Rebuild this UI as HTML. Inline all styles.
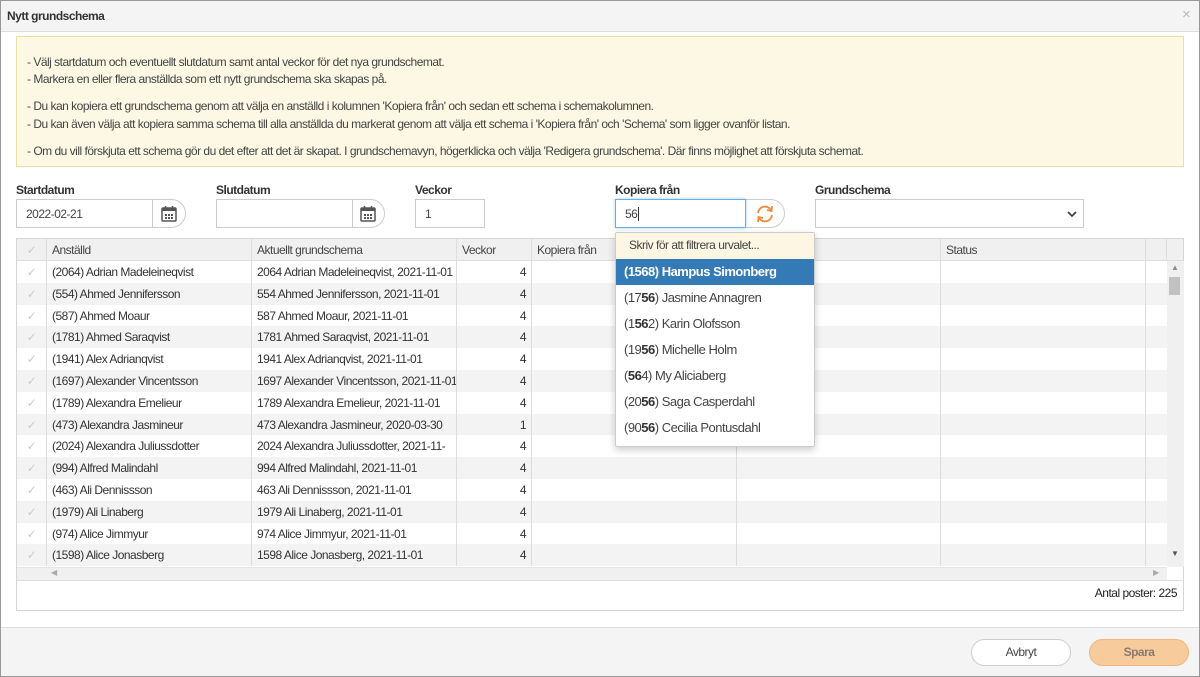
<!DOCTYPE html>
<html><head><meta charset="utf-8"><style>
*{box-sizing:border-box;margin:0;padding:0}
body{width:1200px;height:677px;overflow:hidden;background:#fff;font-family:"Liberation Sans",sans-serif;font-size:12px;color:#333;position:relative;letter-spacing:-0.5px}
.a{position:absolute}
.lbl{font-weight:bold;font-size:12px;color:#333}
.inp{position:absolute;border:1px solid #ccc;background:#fff;height:29px;padding:7px 9px;color:#444}
.grid{position:absolute;left:16px;top:238px;width:1168px;height:373px;border:1px solid #d5d5d5}
.row{position:absolute;left:0;width:1150px;height:22px;line-height:22px}
.c{position:absolute;top:0;height:22px;border-right:1px solid #ddd;padding:0 5px;white-space:nowrap;overflow:hidden}
.chk{color:#ccc;text-align:center}
.dd div{height:26px;line-height:26px;padding-left:8px;font-size:13px;color:#444}
.dd b{color:#333}
</style></head><body>
<div class="a" style="left:0;top:0;width:1200px;height:677px;border:1px solid #999"></div>
<div class="a" style="left:1px;top:1px;width:1198px;height:31px;background:#f4f4f4;border-bottom:1px solid #ddd"></div>
<div class="a" style="left:7px;top:9px;font-weight:bold;font-size:12px">Nytt grundschema</div>
<div class="a" style="left:1182px;top:6px;color:#bbb;font-size:15px">×</div>

<div class="a" style="left:16px;top:36px;width:1168px;height:131px;background:#fcf8e3;border:1px solid #e8dfa8;color:#444">
<div style="position:absolute;top:18px;left:10px">- Välj startdatum och eventuellt slutdatum samt antal veckor för det nya grundschemat.</div>
<div style="position:absolute;top:35px;left:10px">- Markera en eller flera anställda som ett nytt grundschema ska skapas på.</div>
<div style="position:absolute;top:62px;left:10px">- Du kan kopiera ett grundschema genom att välja en anställd i kolumnen 'Kopiera från' och sedan ett schema i schemakolumnen.</div>
<div style="position:absolute;top:80px;left:10px">- Du kan även välja att kopiera samma schema till alla anställda du markerat genom att välja ett schema i 'Kopiera från' och 'Schema' som ligger ovanför listan.</div>
<div style="position:absolute;top:107px;left:10px">- Om du vill förskjuta ett schema gör du det efter att det är skapat. I grundschemavyn, högerklicka och välja 'Redigera grundschema'. Där finns möjlighet att förskjuta schemat.</div>
</div>

<div class="a lbl" style="left:16px;top:183px">Startdatum</div>
<div class="a lbl" style="left:216px;top:183px">Slutdatum</div>
<div class="a lbl" style="left:415px;top:183px">Veckor</div>
<div class="a lbl" style="left:615px;top:183px">Kopiera från</div>
<div class="a lbl" style="left:815px;top:183px">Grundschema</div>

<div class="inp" style="left:16px;top:199px;width:170px;border-radius:0 15px 15px 0">2022-02-21</div>
<div class="a" style="left:152px;top:200px;width:1px;height:27px;background:#ccc"></div>
<svg class="a" style="left:160px;top:205px" width="18" height="18" viewBox="0 0 18 18"><rect x="2" y="3" width="14" height="13" rx="1" fill="none" stroke="#555" stroke-width="1.5"/><rect x="2" y="3" width="14" height="3" fill="#555"/><line x1="5.5" y1="1" x2="5.5" y2="4" stroke="#555" stroke-width="1.5"/><line x1="12.5" y1="1" x2="12.5" y2="4" stroke="#555" stroke-width="1.5"/><g fill="#555"><rect x="5" y="9" width="2" height="2"/><rect x="8" y="9" width="2" height="2"/><rect x="11" y="9" width="2" height="2"/><rect x="5" y="12" width="2" height="2"/><rect x="8" y="12" width="2" height="2"/><rect x="11" y="12" width="2" height="2"/></g></svg>
<div class="inp" style="left:216px;top:199px;width:169px;border-radius:0 15px 15px 0"></div>
<div class="a" style="left:352px;top:200px;width:1px;height:27px;background:#ccc"></div>
<svg class="a" style="left:359px;top:205px" width="18" height="18" viewBox="0 0 18 18"><rect x="2" y="3" width="14" height="13" rx="1" fill="none" stroke="#555" stroke-width="1.5"/><rect x="2" y="3" width="14" height="3" fill="#555"/><line x1="5.5" y1="1" x2="5.5" y2="4" stroke="#555" stroke-width="1.5"/><line x1="12.5" y1="1" x2="12.5" y2="4" stroke="#555" stroke-width="1.5"/><g fill="#555"><rect x="5" y="9" width="2" height="2"/><rect x="8" y="9" width="2" height="2"/><rect x="11" y="9" width="2" height="2"/><rect x="5" y="12" width="2" height="2"/><rect x="8" y="12" width="2" height="2"/><rect x="11" y="12" width="2" height="2"/></g></svg>
<div class="inp" style="left:415px;top:199px;width:70px">1</div>

<div class="inp" style="left:745px;top:199px;width:40px;border-radius:0 15px 15px 0;border-left:none"></div>
<svg class="a" style="left:754px;top:203px" width="22" height="22" viewBox="0 0 22 22"><path d="M4 10 A7 7 0 0 1 17 7" fill="none" stroke="#f08a3c" stroke-width="1.8"/><path d="M18 3 L17.5 8 L13 7" fill="none" stroke="#f08a3c" stroke-width="1.8"/><path d="M18 12 A7 7 0 0 1 5 15" fill="none" stroke="#f08a3c" stroke-width="1.8"/><path d="M4 19 L4.5 14 L9 15" fill="none" stroke="#f08a3c" stroke-width="1.8"/></svg>
<div class="inp" style="left:615px;top:199px;width:131px;border:1px solid #66afe9;box-shadow:0 0 3px rgba(102,175,233,.6)">56<span style="border-left:1px solid #333;margin-left:1px"></span></div>
<div class="inp" style="left:815px;top:199px;width:269px"></div>
<svg class="a" style="left:1066px;top:209px" width="12" height="10" viewBox="0 0 12 10"><path d="M2 3 L6 7 L10 3" fill="none" stroke="#444" stroke-width="1.8"/></svg>

<div class="grid">
<div class="a" style="left:0;top:0;width:1166px;height:22px;background:#f0f0f0;border-bottom:1px solid #ddd"></div>
<div class="row" style="top:0;color:#444">
<div class="c chk" style="left:0;width:30px">✓</div>
<div class="c" style="left:30px;width:205px">Anställd</div>
<div class="c" style="left:235px;width:205px">Aktuellt grundschema</div>
<div class="c" style="left:440px;width:75px">Veckor</div>
<div class="c" style="left:515px;width:205px">Kopiera från</div>
<div class="c" style="left:720px;width:204px"></div>
<div class="c" style="left:924px;width:205px">Status</div>
<div class="c" style="left:1129px;width:21px"></div>
</div>
<div id="rows"></div>
<div class="a" style="left:1150px;top:22px;width:17px;height:306px;background:#f0f0f0"></div>
<div class="a" style="left:1152px;top:38px;width:11px;height:18px;background:#c1c1c1"></div>
<div class="a" style="left:1154px;top:24px;font-size:8px;color:#888">▲</div>
<div class="a" style="left:1154px;top:310px;font-size:8px;color:#555">▼</div>
<div class="a" style="left:0;top:328px;width:1150px;height:13px;background:#f0f0f0;border-top:1px solid #e5e5e5"></div>
<div class="a" style="left:34px;top:329px;font-size:8px;color:#aaa">◀</div>
<div class="a" style="left:1136px;top:329px;font-size:8px;color:#aaa">▶</div>
<div class="a" style="left:0;top:341px;width:1166px;height:1px;background:#ddd"></div>
<div class="a" style="right:6px;top:347px;color:#222">Antal poster: 225</div>
</div>

<div class="a" style="left:1px;top:627px;width:1198px;height:49px;background:#f4f4f4;border-top:1px solid #ddd"></div>
<div class="a" style="left:971px;top:639px;width:100px;height:27px;border:1px solid #ccc;border-radius:14px;background:#fff;text-align:center;line-height:25px;color:#444">Avbryt</div>
<div class="a" style="left:1089px;top:639px;width:100px;height:27px;border:1px solid #f0b47c;border-radius:14px;background:#f8cb9c;text-align:center;line-height:25px;color:#8a7a70;font-weight:bold">Spara</div>

<div class="a dd" style="left:615px;top:232px;width:200px;height:215px;background:#fff;border:1px solid #ccc;box-shadow:0 3px 8px rgba(0,0,0,.2);border-radius:2px">
<div style="background:#fcf6e3;font-size:12px;padding-left:13px;height:26px;line-height:24px">Skriv för att filtrera urvalet...</div>
<div style="background:#337ab7;color:#fff;font-weight:bold">(1568) Hampus Simonberg</div>
<div>(17<b>56</b>) Jasmine Annagren</div>
<div>(1<b>56</b>2) Karin Olofsson</div>
<div>(19<b>56</b>) Michelle Holm</div>
<div>(<b>56</b>4) My Aliciaberg</div>
<div>(20<b>56</b>) Saga Casperdahl</div>
<div>(90<b>56</b>) Cecilia Pontusdahl</div>
</div>

<script>
var d=[["(2064) Adrian Madeleineqvist","2064 Adrian Madeleineqvist, 2021-11-01",4],["(554) Ahmed Jennifersson","554 Ahmed Jennifersson, 2021-11-01",4],["(587) Ahmed Moaur","587 Ahmed Moaur, 2021-11-01",4],["(1781) Ahmed Saraqvist","1781 Ahmed Saraqvist, 2021-11-01",4],["(1941) Alex Adrianqvist","1941 Alex Adrianqvist, 2021-11-01",4],["(1697) Alexander Vincentsson","1697 Alexander Vincentsson, 2021-11-01",4],["(1789) Alexandra Emelieur","1789 Alexandra Emelieur, 2021-11-01",4],["(473) Alexandra Jasmineur","473 Alexandra Jasmineur, 2020-03-30",1],["(2024) Alexandra Juliussdotter","2024 Alexandra Juliussdotter, 2021-11-",4],["(994) Alfred Malindahl","994 Alfred Malindahl, 2021-11-01",4],["(463) Ali Dennissson","463 Ali Dennissson, 2021-11-01",4],["(1979) Ali Linaberg","1979 Ali Linaberg, 2021-11-01",4],["(974) Alice Jimmyur","974 Alice Jimmyur, 2021-11-01",4],["(1598) Alice Jonasberg","1598 Alice Jonasberg, 2021-11-01",4]];
var h="";d.forEach(function(r,i){h+='<div class="row" style="top:'+(22+i*21.8)+'px;background:'+(i%2?'#f3f3f3':'#fff')+'"><div class="c chk" style="left:0;width:30px">✓</div><div class="c" style="left:30px;width:205px">'+r[0]+'</div><div class="c" style="left:235px;width:205px;text-overflow:clip">'+r[1]+'</div><div class="c" style="left:440px;width:75px;text-align:right">'+r[2]+'</div><div class="c" style="left:515px;width:205px"></div><div class="c" style="left:720px;width:204px"></div><div class="c" style="left:924px;width:205px"></div></div>'});
document.getElementById("rows").innerHTML=h;
</script>
</body></html>
